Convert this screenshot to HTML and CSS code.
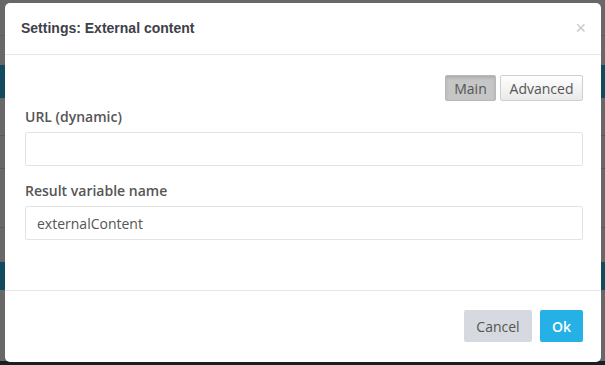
FILE: index.html
```html
<!DOCTYPE html>
<html lang="en">
  <head>
    <meta charset="UTF-8" />
    <meta name="viewport" content="width=device-width, initial-scale=1.0" />
    <title>Settings: External content</title>
    <link rel="stylesheet" href="styles.css">
  </head>
  <body>
    <div class="modal">
      <div class="modal-header">
        <h4 class="modal-title">Settings: External content</h4>
        <button type="button" class="close-btn">&times;</button>
      </div>
      <div class="modal-body">
        <div class="tabs">
          <button type="button" class="tab-btn tab-main active">Main</button>
          <button type="button" class="tab-btn tab-advanced">Advanced</button>
        </div>
        <div class="form-group">
          <label for="url">URL (dynamic)</label>
          <input type="text" id="url" name="url" />
        </div>
        <div class="form-group">
          <label for="result-var">Result variable name</label>
          <input type="text" id="result-var" name="result-var" value="externalContent" />
        </div>
      </div>
      <div class="modal-footer">
        <button type="button" class="cancel-btn">Cancel</button>
        <button type="button" class="ok-btn">Ok</button>
      </div>
    </div>
  </body>
</html>
```

FILE: styles.css
```css
html,
body {
  height: 100%;
}

body {
  margin: 0;
  padding: 3px 4px 3px 5px;
  box-sizing: border-box;
  font-family: "Open Sans", sans-serif;
  color: #555;
  background-color: #1c1e22;
  background-image: linear-gradient(
    to bottom,
    #686868 0,
    #686868 35px,
    #5e5e5e 35px,
    #5e5e5e 36px,
    #686868 36px,
    #686868 65px,
    #124a60 65px,
    #124a60 98px,
    #686868 98px,
    #686868 135px,
    #5a5a5a 135px,
    #5a5a5a 136px,
    #686868 136px,
    #686868 168px,
    #5a5a5a 168px,
    #5a5a5a 169px,
    #686868 169px,
    #686868 227px,
    #5a5a5a 227px,
    #5a5a5a 228px,
    #686868 228px,
    #686868 262px,
    #124a60 262px,
    #124a60 290px,
    #686868 290px,
    #686868 361px,
    #1c1e22 361px
  );
  display: flex;
}

.modal {
  flex: 1;
  background-color: #fff;
  border-radius: 5px;
  display: flex;
  flex-direction: column;
}

.modal-header {
  display: flex;
  align-items: center;
  justify-content: space-between;
  padding: 15px 16px 16px 16px;
  border-bottom: 1px solid #e5e5e5;
}

.modal-title {
  margin: 0;
  font-family: "Liberation Sans", Arial, sans-serif;
  font-size: 14px;
  font-weight: bold;
  line-height: 20px;
  color: #3d4149;
}

.close-btn {
  border: none;
  background: none;
  padding: 0;
  margin-right: -1px;
  font-family: "Liberation Sans", Arial, sans-serif;
  font-size: 18px;
  line-height: 20px;
  color: #c8c8c8;
  cursor: pointer;
}

.modal-body {
  flex: 1;
  padding: 20px 18px 0 20px;
}

.tabs {
  display: flex;
  justify-content: flex-end;
  gap: 4px;
  margin-bottom: 6px;
}

.tab-btn {
  height: 26px;
  padding: 0;
  font-family: "Open Sans", sans-serif;
  font-size: 14px;
  color: #555;
  border: 1px solid #cfcfcf;
  border-radius: 2px;
  background: linear-gradient(to bottom, #fff, #e9e9e9);
  cursor: pointer;
}

.tab-main {
  width: 51px;
}

.tab-advanced {
  width: 83px;
}

.tab-btn.active {
  background: #c6c6c6;
  border-color: #b8b8b8;
  box-shadow: inset 0 2px 3px rgba(0, 0, 0, 0.12);
}

.form-group {
  margin-bottom: 15px;
}

.form-group label {
  display: block;
  font-size: 14px;
  font-weight: 600;
  line-height: 20px;
  color: #555;
  margin-bottom: 5px;
}

.form-group input {
  display: block;
  width: 100%;
  box-sizing: border-box;
  height: 34px;
  padding: 0 11px;
  border: 1px solid #e3e3e3;
  border-radius: 2px;
  font-family: "Open Sans", sans-serif;
  font-size: 14px;
  color: #555;
  outline: none;
}

.modal-footer {
  display: flex;
  justify-content: flex-end;
  gap: 8px;
  padding: 19px 18px 20px 20px;
  border-top: 1px solid #e5e5e5;
}

.modal-footer button {
  height: 32px;
  border: none;
  border-radius: 2px;
  font-family: "Open Sans", sans-serif;
  font-size: 14px;
  cursor: pointer;
}

.cancel-btn {
  width: 68px;
  background-color: #d6d9df;
  color: #555;
}

.ok-btn {
  width: 43px;
  background-color: #25b0e6;
  color: #fff;
  font-size: 15px;
  font-weight: 600;
}
```
